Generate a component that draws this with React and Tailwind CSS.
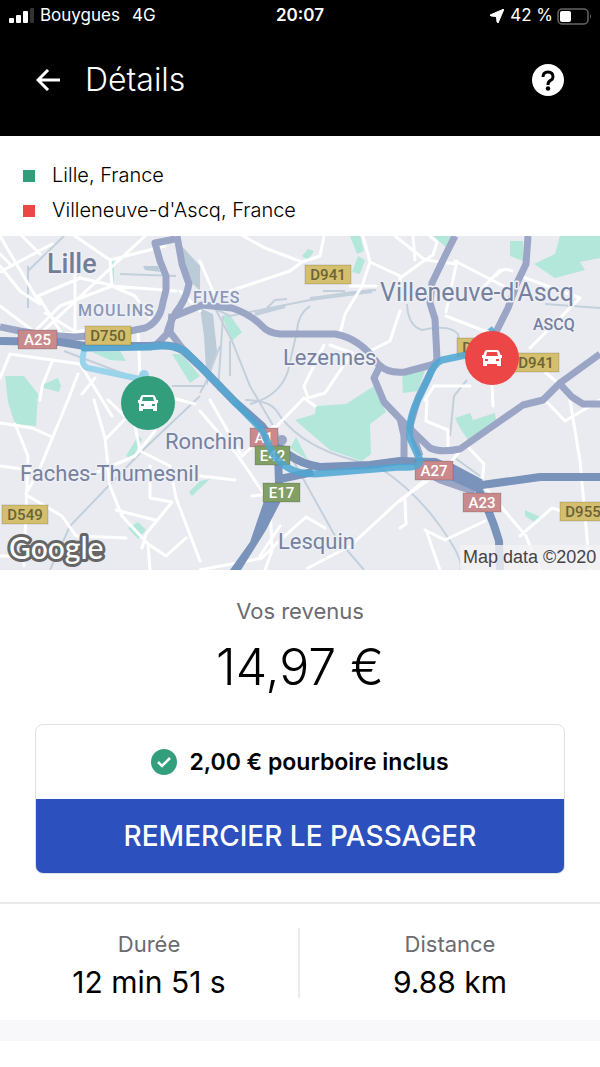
const minorRoads = [
  "M0 70 L40 100 M40 98 L145 0 M0 36 L52 8 M0 30 L20 55 L40 68 L0 0 M38 60 L62 98 L100 92 M38 60 L80 42 L115 50 M22 0 L40 18 M75 0 L110 24 L112 50 M110 24 L165 10 M112 50 L176 55 M112 50 L60 70 L32 98 M112 50 L135 60 L150 82 M75 18 L75 98 M45 77 L82 100 M0 18 L10 28",
  "M10 118 L80 128 L112 180 M52 126 L42 150 L40 164 M10 118 L0 142 M78 138 L68 164 L40 232 L26 258 M95 142 L82 158 M0 187 L32 192 L50 200 M15 188 L28 220 L24 330 M0 230 L30 234 M28 260 L62 280 L76 300 L126 302",
  "M94 164 L105 202 L110 250 L122 280 L148 308 L150 334 M105 204 L124 184 M108 164 L135 190 L140 215 L170 230 L176 262 L200 325 M150 230 L150 262 L172 266 L146 298 L142 312 M116 274 L155 284 M148 308 L166 320 L186 302 M155 195 L135 220 L88 240 M0 320 L26 320",
  "M138 95 L140 140 L165 160 L195 168 M180 55 L200 75 M200 25 L215 60 M230 55 L290 35 L302 26 M243 0 L265 12 L302 26 L320 20 L324 0 M363 0 L370 26 L362 50 L345 78 L340 98 M370 26 L400 40 L400 53 M350 50 L376 50 M330 109 L352 117 L325 157 L308 162 L304 150 L324 109 M400 75 L390 105 L360 120 M395 0 L425 24 L400 42 M425 24 L456 28",
  "M200 175 L235 216 L245 230 L270 267 L272 315 L265 334 M210 164 L242 220 L274 190 M200 240 L235 244 M252 260 L270 258 M200 334 L262 322 L280 304 L306 281 L325 292 M308 332 L350 310 L400 264 L440 236 M440 239 L460 215 M304 162 L275 192 M304 162 L315 170 M260 320 L280 290",
  "M425 24 L433 19 L437 6 L430 0 M413 0 L415 24 M455 25 L515 56 M446 76 L457 25 M446 80 L492 98 M520 40 L580 62 L530 112 M496 40 Q503 30 512 35 M475 60 L500 34 M545 136 L559 148 M400 135 L430 132 M425 164 L434 150 L470 150 M492 150 L493 170 M468 211 L484 228 L482 248 L526 300 L540 334 M570 164 L580 225 L590 334 M545 164 L565 185 L600 164 M520 300 L552 272 L565 276 M427 164 L426 185 L448 194 L448 217 M400 265 L424 245 L440 230 M425 294 L445 304 L485 285 M426 294 L440 334 M405 264 L406 288 L400 292",
];

const railways = [
  "M28 30 L28 72 M28 35 L64 0 M120 38 L176 40 M64 115 L135 142 M172 150 L205 150 M200 160 L145 212 L70 290 L50 334 M205 68 L230 80 L285 69 L345 57 L376 54 M215 72 L232 105 L250 150 L285 210 L335 300 L364 334 M310 70 Q298 78 297 95 L288 135 Q280 160 250 168 M245 164 Q268 164 276 174 Q295 205 340 220 L380 232 Q415 255 440 290 T460 334 M262 77 L275 64 L287 63 M323 55 L345 55",
  "M407 68 Q408 90 422 94 Q450 88 458 98 L460 112 M467 144 L454 160 L450 200 M545 68 L600 72 M455 222 L480 240 M200 157 L205 148 L220 110 M223 80 L218 155 M230 105 L230 140",
];

const parks = [
  "M5 140 L24 140 L38 158 L36 190 L15 188 L8 166 Z",
  "M44 148 L58 142 L61 150 L59 156 L44 152 Z",
  "M172 118 L182 118 L200 140 L190 147 Z",
  "M92 116 L120 115 L126 125 L110 124 Z",
  "M112 22 H114 V46 H112 Z",
  "M222 80 L229 78 L242 96 L232 105 Z",
  "M302 20 L308 13 L314 15 L308 24 Z",
  "M350 0 L360 0 L364 15 L357 18 Z M358 20 L365 24 L360 38 L352 36 Z",
  "M433 0 L453 0 L447 12 Z M510 5 L523 5 L523 25 L510 20 Z",
  "M534 28 L555 18 L560 0 L600 0 L600 22 L580 26 L585 34 L555 42 Z",
  "M402 138 L425 134 L418 155 L403 157 Z",
  "M295 184 L315 178 L316 170 L346 168 L374 150 L386 176 L370 188 L371 218 L362 225 L330 214 Z",
  "M296 201 L308 224 L290 212 Z",
  "M455 182 L470 177 L473 184 L495 177 L496 184 L468 204 L460 192 Z",
  "M138 200 L142 203 L132 224 L126 220 Z",
  "M128 292 L138 286 L146 294 L138 303 Z",
  "M189 256 L200 245 L210 243 L192 260 Z",
  "M525 274 L540 281 L534 286 L525 280 Z",
];

const highways = [
  "M175 3 L155 7 L160 25 L166 40 L166 54 L163 66 Q160 86 145 92 L115 98 L75 101 L45 99 L20 95 L0 91",
  "M177 0 L182 28 L189 48 Q186 64 176 76 Q168 90 167 98 L155 110",
  "M172 78 L170 96 L182 112 L200 130",
  "M175 80 L202 69 L232 72 Q250 78 262 90 Q268 97 280 98 L335 98 Q360 102 378 128 Q388 138 405 136 L435 128",
  "M379 132 L374 142 L384 166 L405 188 L430 212 Q440 217 460 213 L490 192 L523 169 L543 164 L560 147 L600 118",
  "M560 148 L572 161 L583 168 L600 168",
  "M455 0 L445 20 L432 47 L430 67 L435 83 L437 123 L418 162 L410 190 L420 220",
  "M528 0 L526 28 L517 47 L508 72 L495 98",
  "M400 182 L404 200 L404 222 M433 240 L440 244 L475 256",
];

const motorways = [
  "M0 105 L60 106 L85 110 L150 110 Q172 107 184 115 L200 130 L235 166 L262 190 Q285 226 320 231 L370 229 L400 225 L435 226 L470 242 L482 249 L540 241 L600 241",
  "M278 215 L279 248 M313 236 L280 243",
  "M440 235 L478 252 Q492 280 499 305 L500 334",
];

const townLabels = [
  { name: "Lille", x: 47, y: 37, cls: "text-[27px] font-medium fill-[#757d96]" },
  { name: "MOULINS", x: 78, y: 80, cls: "text-[16px] font-medium fill-[#8b97b8] tracking-[1px]" },
  { name: "FIVES", x: 193, y: 67, cls: "text-[16px] font-medium fill-[#8b97b8] tracking-[1px]" },
  { name: "Lezennes", x: 283, y: 129, cls: "text-[22px] fill-[#76819f]" },
  { name: "Villeneuve-d'Ascq", x: 380, y: 65, cls: "text-[25px] fill-[#76819f]" },
  { name: "ASCQ", x: 533, y: 94, cls: "text-[16px] font-medium fill-[#76819f]" },
  { name: "Ronchin", x: 165, y: 213, cls: "text-[22px] fill-[#76819f]" },
  { name: "Faches-Thumesnil", x: 20, y: 245, cls: "text-[22px] fill-[#76819f]" },
  { name: "Lesquin", x: 278, y: 313, cls: "text-[22px] fill-[#76819f]" },
];

const shields = [
  { name: "A25", x: 18, y: 94, w: 39, fill: "#c98a8d", text: "#fff" },
  { name: "D750", x: 85, y: 90, w: 46, fill: "#d3bf6d", text: "#6b6338" },
  { name: "D941", x: 305, y: 29, w: 46, fill: "#d3bf6d", text: "#6b6338" },
  { name: "D941", x: 457, y: 102, w: 46, fill: "#d3bf6d", text: "#6b6338" },
  { name: "D941", x: 513, y: 117, w: 46, fill: "#d3bf6d", text: "#6b6338" },
  { name: "A1", x: 250, y: 192, w: 28, fill: "#c98a8d", text: "#fff" },
  { name: "E42", x: 255, y: 210, w: 35, fill: "#829f66", text: "#fff" },
  { name: "E17", x: 263, y: 247, w: 37, fill: "#829f66", text: "#fff" },
  { name: "A27", x: 415, y: 225, w: 38, fill: "#c98a8d", text: "#fff" },
  { name: "A23", x: 463, y: 257, w: 38, fill: "#c98a8d", text: "#fff" },
  { name: "D549", x: 2, y: 269, w: 46, fill: "#d3bf6d", text: "#6b6338" },
  { name: "D955", x: 560, y: 266, w: 46, fill: "#d3bf6d", text: "#6b6338" },
];

function CarPin({ x, y, color }) {
  return (
    <g transform={`translate(${x} ${y})`}>
      <circle r="27" fill={color} />
      <path
        fill="#fff"
        fillRule="evenodd"
        d="M-5 -8 H5 Q7 -8 7.500 -6 L8.500 -3 H10 V0 H9 V8 H5 V6 H-5 V8 H-9 V0 H-10 V-3 H-8.500 L-7.500 -6 Q-7 -8 -5 -8 Z M-5 -6 L-6 -2 H6 L5 -6 Z M-7 1 V3 H-4 V1 Z M4 1 V3 H7 V1 Z"
      />
    </g>
  );
}

function RouteMap() {
  return (
    <svg viewBox="0 0 600 334" className="block w-full font-['Roboto',sans-serif]" role="img" aria-label="Trajet">
      <rect width="600" height="334" fill="#eaebf1" />
      {parks.map((d) => (
        <path key={d} d={d} fill="#b2e7da" />
      ))}
      <path
        d="M180 8 L200 30 L200 55 L190 45 Z M200 72 L213 78 L217 115 L207 150 L204 100 Z M143 30 L158 30 L160 36 L145 34 Z"
        fill="#bccbd8"
      />
      <g fill="none" stroke="#c3d0dc" strokeWidth="2">
        {railways.map((d) => (
          <path key={d} d={d} />
        ))}
        <path d="M255 78 L285 70 M310 63 L372 55" strokeWidth="4" />
      </g>
      <g fill="none" stroke="#fff" strokeWidth="3" strokeLinejoin="round" strokeLinecap="round">
        {minorRoads.map((d) => (
          <path key={d} d={d} />
        ))}
      </g>
      <g fill="none" stroke="#9ba6c6" strokeWidth="7" strokeLinejoin="round">
        {highways.map((d) => (
          <path key={d} d={d} />
        ))}
      </g>
      <g fill="none" stroke="#7a93bb" strokeWidth="8" strokeLinejoin="round">
        {motorways.map((d) => (
          <path key={d} d={d} />
        ))}
        <path d="M450 233 L480 249" strokeWidth="12" />
      </g>
      <path d="M264 265 L281 265 L266 294 L241 334 L230 334 L250 306 Z" fill="#7a93bb" />
      <circle cx="282" cy="204" r="5" fill="#9ba6c6" />
      <g fill="none" strokeLinejoin="round" strokeLinecap="round">
        <path d="M84 115 Q80 130 88 132 L140 143 L144 138" stroke="#9ad4ea" strokeWidth="6" />
        <circle cx="144" cy="139" r="5" fill="#9ad4ea" />
        <path d="M84 112 L150 111 Q174 107 186 116 L200 130 L235 166" stroke="#5aa6d0" strokeWidth="7" />
      </g>
      {shields.map((s) => (
        <g key={s.name + s.x}>
          <rect x={s.x} y={s.y} width={s.w} height="19" fill={s.fill} stroke="#000" strokeOpacity="0.15" />
          <text x={s.x + s.w / 2} y={s.y + 15} textAnchor="middle" fill={s.text} className="text-[15px] font-medium">
            {s.name}
          </text>
        </g>
      ))}
      <path
        d="M235 166 L262 194 L272 216 Q285 238 315 238 L400 231 Q420 233 420 224 L410 202 Q408 188 415 170 L428 143 Q434 127 442 124 L466 119 M490 96 L494 93"
        fill="none"
        stroke="#4ea6d2"
        strokeOpacity="0.85"
        strokeWidth="7"
        strokeLinejoin="round"
      />
      <g stroke="#eef0f5" strokeWidth="3" strokeLinejoin="round" paintOrder="stroke">
        {townLabels.map((t) => (
          <text key={t.name} x={t.x} y={t.y} className={t.cls}>
            {t.name}
          </text>
        ))}
      </g>
      <CarPin x={148} y={167} color="#329e7c" />
      <CarPin x={492} y={122} color="#ec4646" />
      <rect x="460" y="309" width="140" height="25" fill="#f3f3f5" fillOpacity="0.8" />
      <text x="463" y="327" className="fill-[#444] font-['Liberation_Sans',sans-serif] text-[18px]">
        Map data ©2020
      </text>
      <text
        x="9"
        y="323"
        stroke="#666"
        strokeWidth="6"
        strokeLinejoin="round"
        paintOrder="stroke"
        className="fill-white font-['Lato',sans-serif] text-[30px] font-medium"
      >
        Google
      </text>
    </svg>
  );
}

function StatusBar() {
  return (
    <div className="grid h-8 grid-cols-3 items-center px-2 text-[17px]">
      <div className="flex items-center">
        <svg viewBox="0 0 26 16" className="mr-1.5 h-4 w-[26px]" fill="#fff">
          <rect x="1" y="10" width="5" height="5" rx="1" />
          <rect x="8" y="7" width="5" height="8" rx="1" />
          <rect x="15" y="3" width="5" height="12" rx="1" />
          <rect x="22" y="0" width="4" height="15" rx="1" fill="#333" />
        </svg>
        <span className="mr-3">Bouygues</span>
        <span>4G</span>
      </div>
      <span className="text-center font-semibold">20:07</span>
      <div className="flex items-center justify-end">
        <svg viewBox="0 0 14 14" className="mr-1.5 h-3.5 w-3.5" fill="#fff">
          <path d="M14 0 L0 6 L1 7 L6.500 7.500 L7 13 L8 14 Z" stroke="#fff" strokeLinejoin="round" />
        </svg>
        <span className="mr-1 whitespace-nowrap">42 %</span>
        <svg viewBox="0 0 35 17" className="h-[17px] w-[35px]" fill="none">
          <rect x="1" y="1" width="30" height="15" rx="4" stroke="#666" strokeWidth="1.500" />
          <rect x="3" y="3" width="11" height="11" rx="2" fill="#fff" />
          <path d="M33 6 Q35 8 33 11 Z" fill="#666" />
        </svg>
      </div>
    </div>
  );
}

const stops = [
  { name: "Lille, France", color: "bg-[#329e7c]" },
  { name: "Villeneuve-d'Ascq, France", color: "bg-[#ec4646]" },
];

const stats = [
  { label: "Durée", value: "12 min 51 s" },
  { label: "Distance", value: "9.88 km" },
];

export default function App() {
  return (
    <div className="min-h-screen bg-white font-['Inter',sans-serif] text-black">
      <header className="bg-black pb-6 text-white">
        <StatusBar />
        <div className="flex h-20 items-center px-9 pt-4">
          <button type="button" aria-label="Retour" className="mr-6">
            <svg viewBox="0 0 25 22" className="h-[22px] w-[25px]" fill="none" stroke="#fff" strokeWidth="3">
              <path d="M24 11 H2 M12 1 L2 11 L12 21" />
            </svg>
          </button>
          <h1 className="flex-1 text-[32px] font-light">Détails</h1>
          <button type="button" aria-label="Aide">
            <svg viewBox="0 0 32 32" className="h-8 w-8">
              <circle cx="16" cy="16" r="16" fill="#fff" />
              <path
                d="M11 13 Q11 8 16 8 Q21 8 21 13 Q21 15 18.500 16.500 Q16 17.500 16 21"
                fill="none"
                stroke="#000"
                strokeWidth="3"
              />
              <circle cx="16" cy="24.500" r="2.200" fill="#000" />
            </svg>
          </button>
        </div>
      </header>

      <ul className="flex flex-col gap-2 px-[23px] pt-[26px] pb-3">
        {stops.map((stop) => (
          <li key={stop.name} className="flex items-center gap-[17px] text-[20px] leading-[27px] font-light">
            <span className={`h-3 w-3 ${stop.color}`} />
            {stop.name}
          </li>
        ))}
      </ul>

      <RouteMap />

      <section className="px-[35px] pt-[25px] pb-7 text-center">
        <p className="text-[22px] leading-8 text-[#6b6b70]">Vos revenus</p>
        <p className="pt-2 text-[50px] leading-[64px] font-light">14,97 €</p>
        <div className="mt-[25px] overflow-hidden rounded-lg border border-[#e2e2e2]">
          <div className="flex h-[74px] items-center justify-center gap-3 text-[23px] font-semibold">
            <svg viewBox="0 0 26 26" className="h-[26px] w-[26px]">
              <circle cx="13" cy="13" r="13" fill="#329e7c" />
              <path d="M7 13 L11 17 L19 9" fill="none" stroke="#fff" strokeWidth="2.500" />
            </svg>
            2,00 € pourboire inclus
          </div>
          <button type="button" className="block h-[74px] w-full bg-[#2c50bd] text-[28px] font-medium text-white">
            REMERCIER LE PASSAGER
          </button>
        </div>
      </section>

      <dl className="grid grid-cols-2 divide-x-2 divide-[#ebebeb] border-t-2 border-[#ebebeb] pt-6 pb-[22px] text-center">
        {stats.map((stat) => (
          <div key={stat.label} className="h-[70px]">
            <dt className="text-[22px] leading-8 text-[#6b6b70]">{stat.label}</dt>
            <dd className="text-[30px] leading-[44px]">{stat.value}</dd>
          </div>
        ))}
      </dl>
      <div className="h-[21px] bg-[#f8f8fa]" />
    </div>
  );
}
